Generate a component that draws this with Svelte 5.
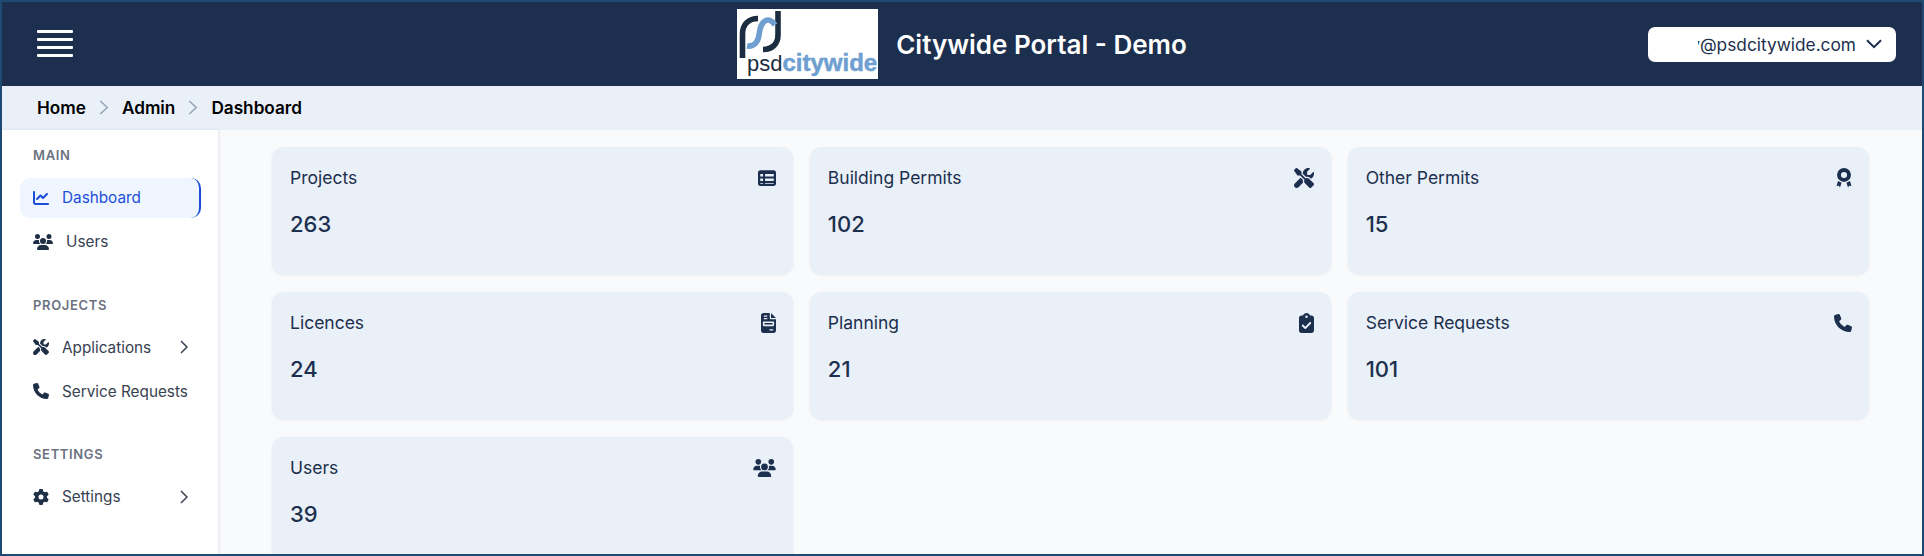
<script>
  const icons = {
    chart: { box: '0 0 512 512', d: 'M64 64c0-17.7-14.3-32-32-32S0 46.3 0 64V400c0 44.2 35.8 80 80 80H480c17.7 0 32-14.3 32-32s-14.3-32-32-32H80c-8.8 0-16-7.2-16-16V64zm406.6 86.6c12.5-12.5 12.5-32.8 0-45.3s-32.8-12.5-45.3 0L320 210.7l-57.4-57.4c-12.5-12.5-32.8-12.5-45.3 0l-112 112c-12.5 12.5-12.5 32.8 0 45.3s32.8 12.5 45.3 0L240 221.3l57.4 57.4c12.5 12.5 32.8 12.5 45.3 0l128-128z' },
    users: { box: '0 0 640 512', d: 'M144 0a80 80 0 1 1 0 160A80 80 0 1 1 144 0zM512 0a80 80 0 1 1 0 160A80 80 0 1 1 512 0zM0 298.7C0 239.8 47.8 192 106.7 192h42.7c15.9 0 31 3.5 44.6 9.7c-1.3 7.2-1.9 14.7-1.9 22.3c0 38.2 16.8 72.5 43.3 96c-.2 0-.4 0-.7 0H21.3C9.6 320 0 310.4 0 298.7zM405.3 320c-.2 0-.4 0-.7 0c26.6-23.5 43.3-57.8 43.3-96c0-7.6-.7-15-1.9-22.3c13.6-6.3 28.7-9.7 44.6-9.7h42.7C592.2 192 640 239.8 640 298.7c0 11.8-9.6 21.3-21.3 21.3H405.3zM224 224a96 96 0 1 1 192 0 96 96 0 1 1 -192 0zM128 485.3C128 411.7 187.7 352 261.3 352H378.7C452.3 352 512 411.7 512 485.3c0 14.7-11.9 26.7-26.7 26.7H154.7c-14.7 0-26.7-11.9-26.7-26.7z' },
    tools: { box: '0 0 512 512', d: 'M78.6 5C69.1-2.4 55.6-1.5 47 7L7 47c-8.5 8.5-9.4 22-2.1 31.6l80 104c4.5 5.9 11.6 9.4 19 9.4h54.1l109 109c-14.7 29-10 65.4 14.3 89.6l112 112c12.5 12.5 32.8 12.5 45.3 0l64-64c12.5-12.5 12.5-32.8 0-45.3l-112-112c-24.2-24.2-60.6-29-89.6-14.3l-109-109V104c0-7.5-3.5-14.5-9.4-19L78.6 5zM19.9 396.1C7.2 408.8 0 426.1 0 444.1C0 481.6 30.4 512 67.9 512c18 0 35.3-7.2 48-19.9L233.7 374.3c-7.8-20.9-9-43.6-3.6-65.1l-61.7-61.7L19.9 396.1zM512 144c0-10.5-1.1-20.7-3.2-30.5c-2.4-11.2-16.1-14.1-24.2-6l-63.9 63.9c-3 3-7.1 4.7-11.3 4.7H352c-8.8 0-16-7.2-16-16V102.6c0-4.2 1.7-8.3 4.7-11.3l63.9-63.9c8.1-8.1 5.2-21.8-6-24.2C388.7 1.1 378.5 0 368 0C288.5 0 224 64.5 224 144l0 .8 85.3 85.3c36-9.1 75.8 .5 104 28.7L429 274.5c49-23 83-72.8 83-130.5z' },
    phone: { box: '0 0 512 512', d: 'M164.9 24.6c-7.7-18.6-28-28.5-47.4-23.2l-88 24C12.1 30.2 0 46 0 64C0 311.4 200.6 512 448 512c18 0 33.8-12.1 38.6-29.5l24-88c5.3-19.4-4.6-39.7-23.2-47.4l-96-40c-16.3-6.8-35.2-2.1-46.3 11.6L304.7 368C234.3 334.7 177.3 277.7 144 207.3L193.3 167c13.7-11.2 18.4-30 11.6-46.3l-40-96z' },
    gear: { box: '0 0 512 512', d: 'M495.9 166.6c3.2 8.7 .5 18.4-6.4 24.6l-43.3 39.4c1.1 8.3 1.7 16.8 1.7 25.4s-.6 17.1-1.7 25.4l43.3 39.4c6.9 6.2 9.6 15.9 6.4 24.6c-4.4 11.9-9.7 23.3-15.8 34.3l-4.7 8.1c-6.6 11-14 21.4-22.1 31.2c-5.9 7.2-15.7 9.6-24.5 6.8l-55.7-17.7c-13.4 10.3-28.2 18.9-44 25.4l-12.5 57.1c-2 9.1-9 16.3-18.2 17.8c-13.8 2.3-28 3.5-42.5 3.5s-28.7-1.2-42.5-3.5c-9.2-1.5-16.2-8.7-18.2-17.8l-12.5-57.1c-15.8-6.5-30.6-15.1-44-25.4L83.1 425.9c-8.8 2.8-18.6 .3-24.5-6.8c-8.1-9.8-15.5-20.2-22.1-31.2l-4.7-8.1c-6.1-11-11.4-22.4-15.8-34.3c-3.2-8.7-.5-18.4 6.4-24.6l43.3-39.4C64.6 273.1 64 264.6 64 256s.6-17.1 1.7-25.4L22.4 191.2c-6.9-6.2-9.6-15.9-6.4-24.6c4.4-11.9 9.7-23.3 15.8-34.3l4.7-8.1c6.6-11 14-21.4 22.1-31.2c5.9-7.2 15.7-9.6 24.5-6.8l55.7 17.7c13.4-10.3 28.2-18.9 44-25.4l12.5-57.1c2-9.1 9-16.3 18.2-17.8C227.3 1.2 241.5 0 256 0s28.7 1.2 42.5 3.5c9.2 1.5 16.2 8.7 18.2 17.8l12.5 57.1c15.8 6.5 30.6 15.1 44 25.4l55.7-17.7c8.8-2.8 18.6-.3 24.5 6.8c8.1 9.8 15.5 20.2 22.1 31.2l4.7 8.1c6.1 11 11.4 22.4 15.8 34.3zM256 336a80 80 0 1 0 0-160 80 80 0 1 0 0 160z' },
    table: { box: '0 0 512 448', d: 'M64 0C28.7 0 0 28.7 0 64V384c0 35.3 28.7 64 64 64H448c35.3 0 64-28.7 64-64V64c0-35.3-28.7-64-64-64H64zM64 112h80v72H64V112zm136 0H448v72H200V112zM64 240h80v72H64V240zm136 0H448v72H200V240zM64 368h80v16H64V368zm136 0H448v16H200V368z' },
    award: { box: '0 0 384 512', d: 'M192 0a178 178 0 1 1 0 356a178 178 0 1 1 0-356zM192 100a78 78 0 1 0 0 156a78 78 0 1 0 0-156zM40 330l90 50-42 122-26-50-62 6zM344 330l-90 50 42 122 26-50 62 6z' },
    file: { box: '0 0 384 512', d: 'M64 0C28.7 0 0 28.7 0 64V448c0 35.3 28.7 64 64 64H320c35.3 0 64-28.7 64-64V160H256c-17.7 0-32-14.3-32-32V0H64zM256 0V128H384L256 0zM72 64h88v32H72V64zm0 64h88v32H72V128zm0 88H312c13 0 24 11 24 24v72c0 13-11 24-24 24H72c-13 0-24-11-24-24V240c0-13 11-24 24-24zm16 40v40H296V256H88zM216 416h96v32H216V416z' },
    clipboard: { box: '0 0 384 512', d: 'M192 0c-41.8 0-77.4 26.7-90.5 64H64C28.7 64 0 92.7 0 128V448c0 35.3 28.7 64 64 64H320c35.3 0 64-28.7 64-64V128c0-35.3-28.7-64-64-64H282.5C269.4 26.7 233.8 0 192 0zm0 64a32 32 0 1 1 0 64 32 32 0 1 1 0-64zM305 273L177 401c-9.4 9.4-24.6 9.4-33.9 0L79 337c-9.4-9.4-9.4-24.6 0-33.9s24.6-9.4 33.9 0l47 47L271 239c9.4-9.4 24.6-9.4 33.9 0s9.4 24.6 0 33.9z' }
  };

  const menu = [
    { title: 'MAIN', items: [
      { label: 'Dashboard', icon: 'chart', active: true },
      { label: 'Users', icon: 'users', wide: true }
    ] },
    { title: 'PROJECTS', items: [
      { label: 'Applications', icon: 'tools', more: true },
      { label: 'Service Requests', icon: 'phone' }
    ] },
    { title: 'SETTINGS', items: [
      { label: 'Settings', icon: 'gear', more: true }
    ] }
  ];

  const cards = [
    { label: 'Projects', value: 263, icon: 'table' },
    { label: 'Building Permits', value: 102, icon: 'tools' },
    { label: 'Other Permits', value: 15, icon: 'award' },
    { label: 'Licences', value: 24, icon: 'file' },
    { label: 'Planning', value: 21, icon: 'clipboard' },
    { label: 'Service Requests', value: 101, icon: 'phone' },
    { label: 'Users', value: 39, icon: 'users' }
  ];
</script>

{#snippet icon(name, cls)}
  <svg class={cls} viewBox={icons[name].box} aria-hidden="true"><path fill="currentColor" fill-rule="evenodd" d={icons[name].d} /></svg>
{/snippet}

<div class="page">
  <header class="topbar">
    <button class="menu-toggle" aria-label="Toggle menu">
      <span></span><span></span><span></span><span></span>
    </button>
    <div class="brand">
      <svg class="logo" viewBox="0 0 141 70" role="img" aria-label="psd citywide">
        <rect width="141" height="70" fill="#fff" />
        <g fill="none" stroke-width="5.6">
          <path stroke="#1c2d42" d="M5.5 49V25C5.5 15 12 9.5 21 9.5" />
          <path stroke="#1c2d42" d="M41 2V26C41 35 35 40.5 26 40.5" />
          <path stroke="#6f9fd0" d="M38 16C35 11 31 10 28 12C23 15 23 21 22 26C21 33 17 38 10 37" />
        </g>
        <text class="logo-psd" x="10" y="62">psd</text>
        <text class="logo-city" x="45.5" y="62">citywide</text>
      </svg>
      <h1>Citywide Portal - Demo</h1>
    </div>
    <button class="account">
      <span class="email"><span>y@psdcitywide.com</span></span>
      <svg viewBox="0 0 16 10" class="caret"><path d="M1 1.2l7 7 7-7" fill="none" stroke="currentColor" stroke-width="2" /></svg>
    </button>
  </header>

  <nav class="crumbs">
    <span>Home</span>
    <svg viewBox="0 0 10 16"><path d="M1 1l7.5 7L1 15" fill="none" stroke="currentColor" stroke-width="1.6" /></svg>
    <span>Admin</span>
    <svg viewBox="0 0 10 16"><path d="M1 1l7.5 7L1 15" fill="none" stroke="currentColor" stroke-width="1.6" /></svg>
    <span>Dashboard</span>
  </nav>

  <div class="body">
    <aside class="sidebar">
      {#each menu as group}
        <section class="group">
          <h2>{group.title}</h2>
          {#each group.items as item}
            <a class="item" class:active={item.active} class:wide={item.wide} href="#top">
              {@render icon(item.icon, 'item-icon')}
              <span class="item-label">{item.label}</span>
              {#if item.more}
                <svg class="more" viewBox="0 0 8 14"><path d="M1 1l6 6-6 6" fill="none" stroke="currentColor" stroke-width="1.5" /></svg>
              {/if}
            </a>
          {/each}
        </section>
      {/each}
    </aside>

    <main class="content">
      <div class="grid">
        {#each cards as card}
          <article class="card">
            <div class="card-head">
              <span>{card.label}</span>
              {@render icon(card.icon, `card-icon icon-${card.icon}`)}
            </div>
            <p class="card-value">{card.value}</p>
          </article>
        {/each}
      </div>
    </main>
  </div>
</div>

<style>
  :global(body) {
    margin: 0;
    font-family: Inter, 'Noto Sans', sans-serif;
  }

  .page {
    box-sizing: border-box;
    width: 1924px;
    height: 556px;
    border: 2px solid #1f4a73;
    display: flex;
    flex-direction: column;
    overflow: hidden;
    background: #f8fafc;
  }

  .topbar {
    flex: 0 0 84px;
    display: grid;
    grid-template-columns: 1fr auto 1fr;
    align-items: center;
    padding: 0 26px;
    background: #1c2f4e;
  }

  .menu-toggle {
    justify-self: start;
    display: flex;
    flex-direction: column;
    gap: 5px;
    width: 36px;
    margin: 0 0 2px 9px;
    padding: 0;
    border: 0;
    background: none;
  }

  .menu-toggle span {
    height: 3px;
    border-radius: 1px;
    background: #fff;
  }

  .brand {
    display: flex;
    align-items: center;
    gap: 18px;
  }

  .logo {
    width: 141px;
    height: 70px;
    display: block;
  }

  .logo-psd {
    font: 400 22px 'Liberation Sans', sans-serif;
    fill: #1c2d42;
  }

  .logo-city {
    font: 700 24px 'Liberation Sans', sans-serif;
    fill: #6f9fd0;
    stroke: #6f9fd0;
    stroke-width: 0.5px;
  }

  h1 {
    margin: 0;
    font-size: 26px;
    font-weight: 600;
    color: #fff;
  }

  .account {
    justify-self: end;
    width: 248px;
    height: 35px;
    display: flex;
    align-items: center;
    justify-content: flex-end;
    gap: 10px;
    padding: 0 14px 0 0;
    border: 0;
    border-radius: 7px;
    background: #fff;
    color: #1c2f4e;
    font: 400 17.3px Inter, sans-serif;
  }

  .email {
    width: 158px;
    display: flex;
    justify-content: flex-end;
    overflow: hidden;
    white-space: nowrap;
  }

  .caret {
    width: 16px;
    height: 10px;
  }

  .crumbs {
    flex: 0 0 44px;
    box-sizing: border-box;
    display: flex;
    align-items: center;
    gap: 13px;
    padding: 0 0 2px 35px;
    background: #e9f0f8;
    color: #000;
    font-size: 17.2px;
    font-weight: 600;
  }

  .crumbs svg {
    width: 10px;
    height: 15px;
    color: #94a3b8;
  }

  .body {
    flex: 1;
    min-height: 0;
    display: flex;
  }

  .sidebar {
    flex: 0 0 216px;
    box-sizing: border-box;
    padding: 17px 17px 0 18px;
    background: #fff;
    box-shadow: 1px 0 3px rgba(15, 23, 42, 0.1);
  }

  .group {
    margin-bottom: 35px;
  }

  h2 {
    margin: 0 0 14.5px 13px;
    font-size: 13px;
    line-height: 16px;
    font-weight: 600;
    letter-spacing: 0.05em;
    color: #6b7280;
  }

  .item {
    height: 40px;
    display: flex;
    align-items: center;
    gap: 13px;
    margin-bottom: 4px;
    padding-left: 13px;
    box-sizing: border-box;
    border-radius: 10px;
    color: #374151;
    font-size: 15.3px;
    text-decoration: none;
  }

  .item.active {
    background: #eff6ff;
    border-right: 2px solid #1d4ed8;
    color: #1d4ed8;
  }

  .item-icon {
    width: 16px;
    height: 16px;
    flex: none;
    color: #1f2f46;
  }

  .item.active .item-icon {
    color: #1d4ed8;
  }

  .item.wide .item-icon {
    width: 20px;
  }

  .item-label {
    flex: 1;
    white-space: nowrap;
  }

  .more {
    width: 8px;
    height: 14px;
    margin-right: 13px;
  }

  .content {
    flex: 1;
    min-width: 0;
    padding: 17px 53px 0 54px;
  }

  .grid {
    display: grid;
    grid-template-columns: repeat(3, 1fr);
    grid-auto-rows: 127px;
    gap: 18px 16.5px;
  }

  .card {
    box-sizing: border-box;
    padding: 21px 17px 0 18px;
    border-radius: 12px;
    background: #e9f0f8;
    box-shadow: 0 1px 3px rgba(15, 23, 42, 0.08);
    color: #1c2f4e;
  }

  .card-head {
    display: flex;
    align-items: center;
    justify-content: space-between;
    height: 20px;
    font-size: 17.5px;
    line-height: 20px;
  }

  .card-icon {
    flex: none;
    width: 20px;
    height: 20px;
  }

  .card-icon.icon-table {
    width: 18px;
    height: 16px;
  }

  .card-icon.icon-phone {
    width: 18px;
    height: 18px;
  }

  .card-icon.icon-users {
    width: 23px;
    height: 18px;
  }

  .card-icon.icon-award {
    width: 16px;
    height: 20px;
  }

  .card-icon.icon-file,
  .card-icon.icon-clipboard {
    width: 15px;
    height: 20px;
  }

  .card-value {
    margin: 22px 0 0;
    font-size: 22px;
    line-height: 28px;
    font-weight: 500;
  }
</style>
